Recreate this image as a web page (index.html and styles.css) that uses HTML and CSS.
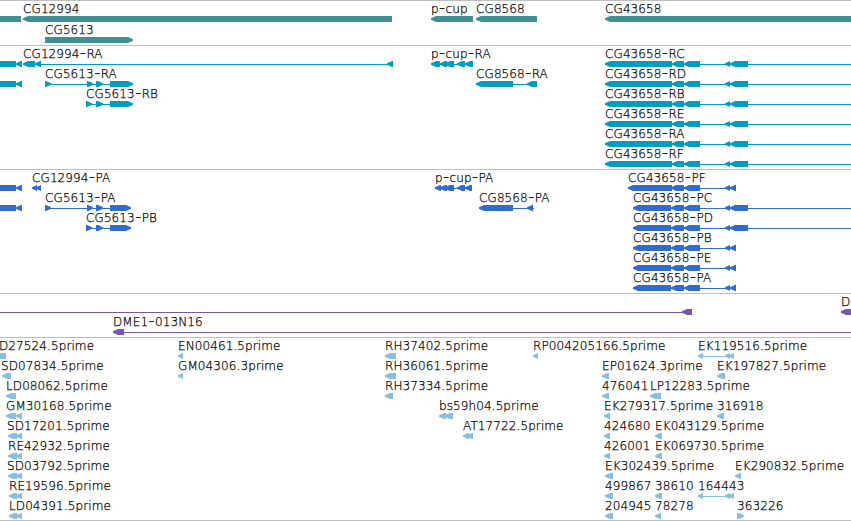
FILE: index.html
```html
<!DOCTYPE html>
<html lang="en">
<head>
<meta charset="utf-8">
<title>Genome browser</title>
<link rel="stylesheet" href="styles.css">
</head>
<body>
<main class="browser" id="browser"></main>
<script src="tracks.js"></script>
</body>
</html>
```
FILE: styles.css
```css
body {
  margin: 0;
  background: #fff;
  overflow: hidden;
}

.browser {
  display: flex;
  flex-direction: column;
  width: 851px;
  border-bottom: 1px solid #bebebe;
}

.track {
  display: flex;
  flex-direction: column;
  padding: 2px 0 1px;
  border-top: 1px solid #bebebe;
}

.track-genes,
.track-cdna {
  padding-bottom: 0;
}

.row {
  display: block;
  width: 851px;
  height: 20px;
  overflow: visible;
  fill: currentColor;
}

.row rect {
  shape-rendering: crispEdges;
}

.track-genes .row {
  height: 21px;
}

.label {
  fill: #000;
  stroke: #000;
  stroke-width: 0.25px;
  font: 200 12px "DejaVu Sans", sans-serif;
  letter-spacing: 0.1px;
}

.hyphen {
  font-size: 17px;
}

.track-genes { color: #418e93; }
.track-transcripts { color: #009ebe; }
.track-proteins { color: #306ccf; }
.track-bacs { color: #7657a5; }
.track-cdna { color: #88bfdf; }
```
FILE: tracks.js
```js
// Feature: [label, label x, strand, blocks, connecting line].
// Strand is "<", ">" or "" for a block that runs off the left edge.
const pcupRA = [[431, 440], [440, 447], [445, 454], [457, 465], [465, 473]];
const pcupPA = [[435, 441], [440, 447], [445, 454], [457, 465], [465, 472]];
const rnaBlocks = [[605, 672], [672, 684], [684, 700], [725, 730], [730, 748]];
const rna = s => ["CG43658-R" + s, 605, "<", rnaBlocks, [605, 851]];
const longProtein = s => ["CG43658-P" + s, 633, "<",
  [[633, 671], [671, 684], [684, 700], [725, 730], [730, 748]], [633, 851]];
const shortProtein = (s, x, end) => ["CG43658-P" + s, x, "<",
  [[x, end], [671, 684], [684, 700], [725, 730], [730, 736]], [x, 736]];
const edge = [["", 0, "", [[0, 16]]], ["", 0, "<", [[16, 22]]]];
const est = (name, x, ...blocks) => [name, x, "<", blocks];
const split = name => [name, 698, "<", [[698, 703], [725, 730], [729, 734]], [698, 734]];

const tracks = [
  ["genes", [
    [["", 0, "", [[0, 21]]], est("CG12994", 23, [23, 392]), est("p-cup", 431, [431, 473]),
      est("CG8568", 476, [476, 537]), est("CG43658", 605, [605, 851])],
    [["CG5613", 45, ">", [[45, 133]]]]
  ]],
  ["transcripts", [
    [...edge, ["CG12994-RA", 23, "<", [[23, 35], [35, 41], [387, 393]], [23, 393]],
      ["p-cup-RA", 431, "<", pcupRA, [431, 473]], rna("C")],
    [...edge, ["CG5613-RA", 45, ">", [[45, 51], [87, 93], [96, 103], [110, 133]], [45, 133]],
      ["CG8568-RA", 476, "<", [[476, 513], [527, 537]], [476, 537]], rna("D")],
    [["CG5613-RB", 86, ">", [[86, 92], [96, 103], [110, 133]], [86, 133]], rna("B")],
    [rna("E")], [rna("A")], [rna("F")]
  ]],
  ["proteins", [
    [...edge, est("CG12994-PA", 32, [32, 37], [36, 41]),
      ["p-cup-PA", 435, "<", pcupPA, [435, 472]], shortProtein("F", 628, 672)],
    [...edge, ["CG5613-PA", 45, ">", [[45, 51], [87, 93], [96, 103], [110, 131]], [45, 131]],
      ["CG8568-PA", 479, "<", [[479, 513], [527, 533]], [479, 534]], longProtein("C")],
    [["CG5613-PB", 86, ">", [[86, 92], [96, 103], [110, 131]], [86, 131]], longProtein("D")],
    [shortProtein("B", 633, 671)], [shortProtein("E", 633, 671)], [shortProtein("A", 633, 671)]
  ]],
  ["bacs", [
    [["", 0, "<", [[682, 692]], [0, 692]], est("D", 841, [841, 853])],
    [["DME1-013N16", 113, "<", [[113, 124]], [113, 851]]]
  ]],
  ["cdna", [
    [["D27524.5prime", -1, "", [[0, 6]]], est("EN00461.5prime", 178, [178, 183]),
      est("RH37402.5prime", 385, [385, 396]), est("RP004205166.5prime", 533, [533, 538]),
      split("EK119516.5prime")],
    [est("SD07834.5prime", 1, [2, 11]), est("GM04306.3prime", 178, [178, 183]),
      est("RH36061.5prime", 385, [385, 396]), est("EP01624.3prime", 602, [602, 609]),
      est("EK197827.5prime", 717, [717, 725])],
    [est("LD08062.5prime", 6, [6, 16]), est("RH37334.5prime", 385, [385, 393]),
      est("476041", 602, [602, 609]), est("LP12283.5prime", 650, [650, 661])],
    [est("GM30168.5prime", 6, [6, 16], [16, 22]), est("bs59h04.5prime", 439, [439, 446], [445, 453]),
      est("EK279317.5prime", 604, [604, 610]), est("316918", 717, [717, 724])],
    [est("SD17201.5prime", 7, [8, 17], [16, 22]), est("AT17722.5prime", 463, [463, 469], [467, 473]),
      est("424680", 604, [604, 610]), est("EK043129.5prime", 655, [655, 662])],
    [est("RE42932.5prime", 8, [8, 17], [16, 22]), est("426001", 604, [604, 610]),
      est("EK069730.5prime", 655, [655, 662])],
    [est("SD03792.5prime", 7, [8, 17], [16, 22]), est("EK302439.5prime", 605, [605, 613]),
      est("EK290832.5prime", 735, [735, 741])],
    [est("RE19596.5prime", 9, [9, 17], [16, 22]), est("499867", 605, [605, 613]),
      est("38610", 655, [655, 662]), split("164443")],
    [est("LD04391.5prime", 9, [9, 17], [16, 22]), est("204945", 605, [605, 613]),
      est("78278", 655, [655, 661]), ["363226", 737, ">", [[737, 744]]]]
  ]]
];

const TOP = 13, MID = 16, BOTTOM = 19, HEAD = 5;

function block(strand, [a, b]) {
  const head = Math.min(HEAD, b - a);
  if (strand === "<") {
    return `<path d="M${a} 15.2L${a + head} ${TOP}H${b}V${BOTTOM}H${a + head}L${a} 16.8Z"/>`;
  }
  if (strand === ">") {
    return `<path d="M${b} 15.2L${b - head} ${TOP}H${a}V${BOTTOM}H${b - head}L${b} 16.8Z"/>`;
  }
  return `<rect x="${a}" y="${TOP}" width="${b - a}" height="6"/>`;
}

function feature([name, x, strand, blocks, line]) {
  const text = name.replace(/-(.)/g, '<tspan class="hyphen" dx="0.3">-</tspan><tspan dx="0.3">$1</tspan>');
  return (line ? `<rect x="${line[0]}" y="${MID}" width="${line[1] - line[0]}" height="1"/>` : "") +
    blocks.map(b => block(strand, b)).join("") +
    (name ? `<text class="label" x="${x}" y="10">${text}</text>` : "");
}

document.getElementById("browser").innerHTML = tracks.map(([name, rows]) =>
  `<section class="track track-${name}">` +
  rows.map(r => `<svg class="row">${r.map(feature).join("")}</svg>`).join("") +
  "</section>").join("");
```
